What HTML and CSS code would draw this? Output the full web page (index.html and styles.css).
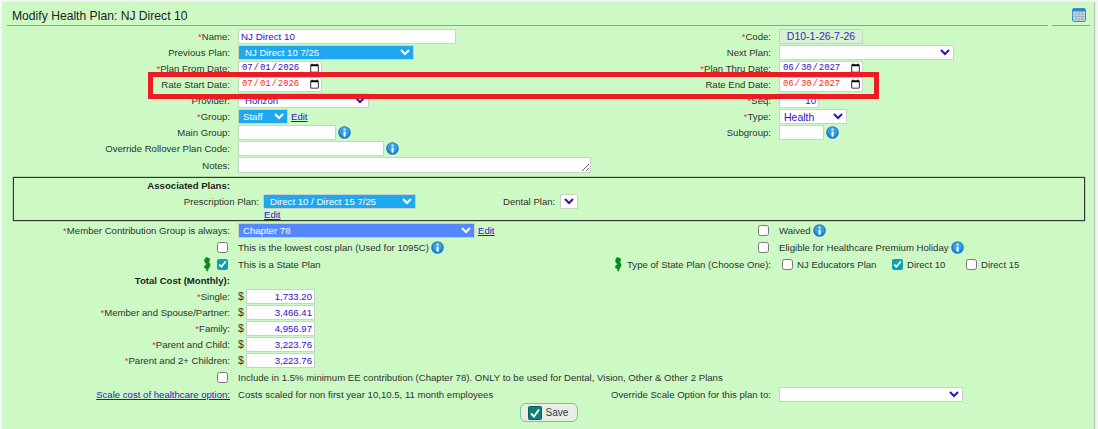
FILE: index.html
```html
<!DOCTYPE html>
<html lang="en">
<head>
<meta charset="utf-8">
<title>Modify Health Plan</title>
<link rel="stylesheet" href="styles.css">
</head>
<body>
<svg class="defs" aria-hidden="true">
  <symbol id="info" viewBox="0 0 14 14">
    <circle cx="7" cy="7" r="6.8" fill="#1c80c8"/>
    <circle cx="7" cy="6" r="5" fill="#3a9fe0"/>
    <rect x="6" y="6" width="2.2" height="5.5" fill="#fff"/>
    <rect x="6" y="2.8" width="2.2" height="2" fill="#fff"/>
  </symbol>
  <symbol id="nj" viewBox="0 0 8 16">
    <path d="M3 0 L7 1.500 L7 4 L6 5.500 L7.500 7 L7.500 9.500 L6 12 L4.500 15.500 L3 15 L3.500 13 L1 11.500 L1 9.500 L3.500 7.500 L1.500 6 L1 3 Z" fill="#0a8a1e"/>
  </symbol>
</svg>
<main class="panel">
  <header class="head">
    <h1 class="title">Modify Health Plan: NJ Direct 10</h1>
    <div class="tools">
      <svg class="cal" viewBox="0 0 14 14" width="14" height="14" aria-hidden="true">
        <rect x="0.500" y="0.500" width="13" height="13" rx="1.500" fill="#c5dbe2" stroke="#3d8fd0"/>
        <rect x="1" y="1" width="12" height="2.500" fill="#2f86d0"/>
        <path d="M4 4v9M7 4v9M10 4v9M1 6h12M1 8.500h12M1 11h12" stroke="#8fa9ae" stroke-width="0.700"/>
      </svg>
    </div>
  </header>

  <div class="row">
    <label class="lbl"><i class="req">*</i>Name:</label>
    <div class="val"><input class="field w-name" value="NJ Direct 10"></div>
    <label class="lbl"><i class="req">*</i>Code:</label>
    <div class="val"><span class="code">D10-1-26-7-26</span></div>
  </div>
  <div class="row">
    <label class="lbl">Previous Plan:</label>
    <div class="val"><select class="sel blue w-prev"><option>NJ Direct 10 7/25</option></select></div>
    <label class="lbl">Next Plan:</label>
    <div class="val"><select class="sel w-next"><option></option></select></div>
  </div>
  <div class="row">
    <label class="lbl"><i class="req">*</i>Plan From Date:</label>
    <div class="val"><input type="date" class="date" value="2026-07-01"></div>
    <label class="lbl"><i class="req">*</i>Plan Thru Date:</label>
    <div class="val"><input type="date" class="date" value="2027-06-30"></div>
  </div>
  <div class="row">
    <label class="lbl">Rate Start Date:</label>
    <div class="val"><input type="date" class="date red" value="2026-07-01"></div>
    <label class="lbl">Rate End Date:</label>
    <div class="val"><input type="date" class="date red" value="2027-06-30"></div>
  </div>
  <div class="row">
    <label class="lbl">Provider:</label>
    <div class="val"><select class="sel w-prov"><option>Horizon</option></select></div>
    <label class="lbl"><i class="req">*</i>Seq:</label>
    <div class="val"><input class="field num w-seq" value="10"></div>
  </div>
  <div class="row">
    <label class="lbl"><i class="req">*</i>Group:</label>
    <div class="val"><select class="sel blue w-group"><option>Staff</option></select><a class="lnk" href="#">Edit</a></div>
    <label class="lbl"><i class="req">*</i>Type:</label>
    <div class="val"><select class="sel w-type"><option>Health</option></select></div>
  </div>
  <div class="row">
    <label class="lbl">Main Group:</label>
    <div class="val"><input class="field w-main"><svg class="info"><use href="#info"/></svg></div>
    <label class="lbl">Subgroup:</label>
    <div class="val"><input class="field w-sub"><svg class="info"><use href="#info"/></svg></div>
  </div>
  <div class="row">
    <label class="lbl">Override Rollover Plan Code:</label>
    <div class="val"><input class="field w-over"><svg class="info"><use href="#info"/></svg></div>
  </div>
  <div class="row row-notes">
    <label class="lbl">Notes:</label>
    <div class="val"><textarea class="notes"></textarea></div>
  </div>

  <section class="assoc">
    <div class="assoc-head">Associated Plans:</div>
    <div class="assoc-row">
      <label class="assoc-lbl">Prescription Plan:</label>
      <select class="sel blue w-rx"><option>Direct 10 / Direct 15 7/25</option></select>
      <label class="dental-lbl">Dental Plan:</label>
      <select class="sel w-dental"><option></option></select>
    </div>
    <div class="assoc-edit"><a class="lnk" href="#">Edit</a></div>
  </section>

  <div class="row">
    <label class="lbl"><i class="req">*</i>Member Contribution Group is always:</label>
    <div class="val"><select class="sel royal w-member"><option>Chapter 78</option></select><a class="lnk" href="#">Edit</a></div>
    <div class="lbl"><input type="checkbox" class="chk"></div>
    <div class="val"><span>Waived</span><svg class="info"><use href="#info"/></svg></div>
  </div>
  <div class="row row-18">
    <div class="lbl"><input type="checkbox" class="chk"></div>
    <div class="val"><span>This is the lowest cost plan (Used for 1095C)</span><svg class="info"><use href="#info"/></svg></div>
    <div class="lbl"><input type="checkbox" class="chk"></div>
    <div class="val"><span>Eligible for Healthcare Premium Holiday</span><svg class="info"><use href="#info"/></svg></div>
  </div>
  <div class="row row-17">
    <div class="lbl"><svg class="nj nj-a"><use href="#nj"/></svg><input type="checkbox" class="chk" checked></div>
    <div class="val">This is a State Plan</div>
    <div class="lbl"><svg class="nj nj-b"><use href="#nj"/></svg>Type of State Plan (Choose One):</div>
    <div class="val opts">
      <input type="checkbox" class="chk"><span class="opt opt-a">NJ Educators Plan</span>
      <input type="checkbox" class="chk" checked><span class="opt opt-b">Direct 10</span>
      <input type="checkbox" class="chk"><span class="opt">Direct 15</span>
    </div>
  </div>
  <div class="row row-15">
    <div class="lbl bold">Total Cost (Monthly):</div>
  </div>
  <div class="row">
    <label class="lbl"><i class="req">*</i>Single:</label>
    <div class="val"><span class="cur">$</span><input class="field num w-cost" value="1,733.20"></div>
  </div>
  <div class="row">
    <label class="lbl"><i class="req">*</i>Member and Spouse/Partner:</label>
    <div class="val"><span class="cur">$</span><input class="field num w-cost" value="3,466.41"></div>
  </div>
  <div class="row">
    <label class="lbl"><i class="req">*</i>Family:</label>
    <div class="val"><span class="cur">$</span><input class="field num w-cost" value="4,956.97"></div>
  </div>
  <div class="row">
    <label class="lbl"><i class="req">*</i>Parent and Child:</label>
    <div class="val"><span class="cur">$</span><input class="field num w-cost" value="3,223.76"></div>
  </div>
  <div class="row">
    <label class="lbl"><i class="req">*</i>Parent and 2+ Children:</label>
    <div class="val"><span class="cur">$</span><input class="field num w-cost" value="3,223.76"></div>
  </div>
  <div class="row row-18">
    <div class="lbl"><input type="checkbox" class="chk"></div>
    <div class="val wide">Include in 1.5% minimum EE contribution (Chapter 78). ONLY to be used for Dental, Vision, Other &amp; Other 2 Plans</div>
  </div>
  <div class="row">
    <div class="lbl"><a class="lnk" href="#">Scale cost of healthcare option:</a></div>
    <div class="val">Costs scaled for non first year 10,10.5, 11 month employees</div>
    <label class="lbl">Override Scale Option for this plan to:</label>
    <div class="val"><select class="sel w-scale"><option></option></select></div>
  </div>
  <div class="actions">
    <button type="button" class="save">
      <svg class="save-ico" viewBox="0 0 14 14" width="14" height="14" aria-hidden="true">
        <rect x="0.500" y="0.500" width="13" height="13" rx="1" fill="#0f7f7f" stroke="#0a5c5c"/>
        <path d="M3 7.500 L6 10.500 L11 3.500" fill="none" stroke="#fff" stroke-width="1.800"/>
      </svg>Save
    </button>
  </div>

  <div class="highlight"></div>
</main>
</body>
</html>
```
FILE: styles.css
```css
html, body { margin: 0; padding: 0; }
body {
  width: 1098px;
  height: 429px;
  overflow: hidden;
  background: #f4f6f4;
  font-family: "Liberation Sans", Arial, sans-serif;
  font-size: 9.600px;
  color: #2e332e;
}
.defs { position: absolute; width: 0; height: 0; }
.panel {
  position: relative;
  margin: 2px 4px 0 2px;
  height: 427px;
  background: #cdf9c5;
  box-shadow: 1px 0 1px #bcc4bc;
}
.head {
  display: flex;
  height: 24px;
  margin: 0 4px 2px 5px;
  gap: 4px;
}
.title {
  flex: 1;
  margin: 0;
  padding: 6px 0 0 5px;
  font-size: 12.150px;
  font-weight: 400;
  line-height: 16px;
  color: #222;
  border-bottom: 1px solid #8ea58a;
}
.tools {
  width: 38px;
  padding: 6px 0 0 20px;
  box-sizing: border-box;
  border-bottom: 1px solid #8ea58a;
}
.cal { display: block; }

.row {
  display: grid;
  grid-template-columns: 228px 292px 233px 1fr;
  column-gap: 8px;
  height: 16px;
  align-items: center;
}
.row-notes { height: 18px; }
.row-18 { height: 18px; }
.row-17 { height: 17px; }
.row-15 { height: 15px; }
.lbl {
  display: flex;
  justify-content: flex-end;
  align-items: center;
  white-space: nowrap;
}
.val {
  display: flex;
  align-items: center;
  white-space: nowrap;
}
.wide { grid-column: 2 / 5; }
.bold { font-weight: 700; color: #1c1f1c; }
.req { font-style: normal; color: #f0282c; }
.lnk { color: #3311cc; margin-left: 3px; }
.lbl .lnk { margin-left: 0; }

input, select, textarea {
  box-sizing: border-box;
  font-family: "Liberation Sans", Arial, sans-serif;
  font-size: 9.600px;
  color: #3311bb;
  margin: 0;
}
.field, .date, .sel, .notes, .code {
  height: 15px;
  background: #fff;
  border: 1px solid #c8d2c6;
  border-radius: 0;
  padding: 0 2px;
}
.num { text-align: right; }
.date {
  flex: none;
  width: 84px;
  font-family: "Liberation Mono", monospace;
  font-size: 9px;
  letter-spacing: -0.100px;
  padding-right: 0;
}
.date::-webkit-calendar-picker-indicator {
  margin: 0 1px 0 0;
  padding: 0;
  width: 11px;
  height: 11px;
}
.date::-webkit-datetime-edit { padding: 0; }
.red { color: #ff2a2a; }
.code {
  display: block;
  box-sizing: border-box;
  width: 84px;
  background: #d6f2d4;
  color: #3a2cb0;
  font-size: 10.500px;
  text-align: center;
  line-height: 13px;
}
.sel { padding: 0 0 0 2px; }
.blue { background-color: #1fa8f0; color: #fff; padding-left: 2px; }
.royal { background-color: #5588ff; color: #fff; padding-left: 0; }

.w-name { width: 218px; font-size: 9.800px; }
.w-prev { width: 176px; }
.w-next { width: 175px; }
.w-prov { width: 131px; }
.w-seq { width: 40px; }
.w-group { width: 50px; padding-left: 0; }
.w-type { width: 68px; padding-left: 0; font-size: 10.500px; }
.w-main { width: 98px; }
.w-sub { width: 45px; }
.w-over { width: 146px; }
.w-rx { width: 153px; }
.w-dental { width: 18px; }
.w-member { width: 237px; }
.w-scale { width: 184px; }
.w-cost { width: 69px; }

.notes {
  display: block;
  flex: none;
  width: 353px;
  height: 16px;
  resize: both;
}
.info { width: 13px; height: 13px; margin-left: 2px; flex: none; }
.chk {
  width: 11px;
  height: 11px;
  margin: 0;
  accent-color: #0f9fb4;
}
.lbl .chk { margin-right: 2px; }
.nj { width: 8px; height: 15px; flex: none; }
.nj-a { margin-right: 6px; }
.nj-b { margin-right: 5px; }
.opts .chk { margin-left: 3px; }
.opt { margin-left: 4px; }
.opt-a { width: 92px; }
.opt-b { width: 56px; }
.cur { width: 8px; font-size: 10.500px; }

.assoc {
  box-sizing: border-box;
  height: 44px;
  margin: 3px 9px 1px 11px;
  border: 1px solid #2e3a2e;
  box-shadow: 0 0 1px #2e3a2e;
}
.assoc-head {
  width: 216px;
  padding-top: 2px;
  line-height: 12px;
  text-align: right;
  font-weight: 700;
  color: #1c1f1c;
}
.assoc-row {
  display: flex;
  align-items: center;
  height: 16px;
  margin-top: 1px;
}
.assoc-lbl { width: 245px; text-align: right; margin-right: 4px; }
.dental-lbl { flex: none; width: 52px; margin-left: 87px; margin-right: 5px; white-space: nowrap; }
.assoc-edit { padding-left: 247px; line-height: 12px; }

.actions {
  display: flex;
  justify-content: center;
  padding-top: 1px;
  margin-right: -1px;
}
.save {
  display: flex;
  align-items: center;
  gap: 4px;
  box-sizing: border-box;
  width: 58px;
  height: 19px;
  padding: 0 0 0 7px;
  background: #e6efe2;
  border: 1px solid #79c58a;
  border-radius: 6px;
  font-family: "Liberation Sans", Arial, sans-serif;
  font-size: 10px;
  color: #2d3a52;
}
.highlight {
  position: absolute;
  left: 146px;
  top: 70px;
  width: 721px;
  height: 17px;
  border: 5px solid #ed1c24;
}
```
